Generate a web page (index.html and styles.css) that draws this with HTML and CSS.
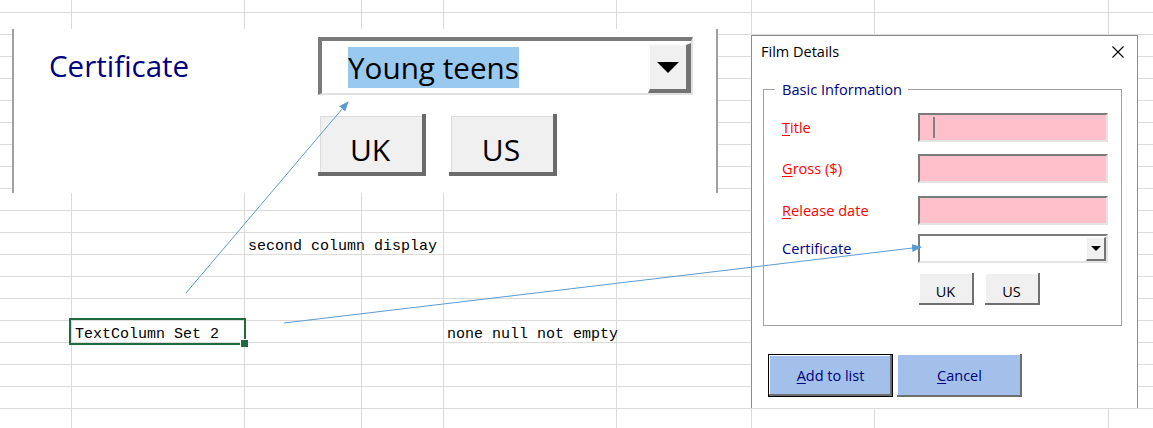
FILE: index.html
```html
<!DOCTYPE html>
<html lang="en">
<head>
<meta charset="utf-8">
<title>Film Details</title>
<link rel="stylesheet" href="styles.css">
</head>
<body>
<div class="sheet">
  <div class="cell c-second">second column display</div>
  <div class="cell c-textcol">TextColumn Set 2<span class="sel"><span class="handle"></span></span></div>
  <div class="cell c-none">none null not empty</div>

  <div class="panel">
    <div class="panel-label">Certificate</div>
    <div class="panel-controls">
      <div class="combo-big">
        <div class="combo-text"><span class="hl">Young teens</span></div>
        <div class="drop-big">
          <svg width="22" height="11" viewBox="0 0 22 11"><polygon points="0,0 22,0 11,11" fill="#000"/></svg>
        </div>
      </div>
      <div class="big-row">
        <button class="big-btn">UK</button>
        <button class="big-btn">US</button>
      </div>
    </div>
  </div>

  <div class="dialog">
    <div class="titlebar">
      <span class="title">Film Details</span>
      <svg class="close" width="12" height="12" viewBox="0 0 12 12"><path d="M0.5 0.5 L11.5 11.5 M11.5 0.5 L0.5 11.5" stroke="#000" stroke-width="1.1" fill="none"/></svg>
    </div>
    <fieldset class="frame">
      <legend>Basic Information</legend>
      <div class="frow">
        <span class="lbl req"><u>T</u>itle</span>
        <div class="tb"><span class="caret"></span></div>
      </div>
      <div class="frow r2">
        <span class="lbl req"><u>G</u>ross ($)</span>
        <div class="tb"></div>
      </div>
      <div class="frow r3">
        <span class="lbl req"><u>R</u>elease date</span>
        <div class="tb"></div>
      </div>
      <div class="frow r4">
        <span class="lbl">Certificate</span>
        <div class="combo-sm">
          <div class="drop-sm">
            <svg width="10" height="5" viewBox="0 0 10 5"><polygon points="0,0 10,0 5,5" fill="#000"/></svg>
          </div>
        </div>
      </div>
      <div class="sm-row">
        <button class="sm-btn">UK</button>
        <button class="sm-btn">US</button>
      </div>
    </fieldset>
    <div class="actions">
      <button class="act default"><u>A</u>dd to list</button>
      <button class="act"><u>C</u>ancel</button>
    </div>
  </div>

  <svg class="arrows" width="1153" height="428" viewBox="0 0 1153 428">
    <defs>
      <marker id="ah" markerWidth="10" markerHeight="8" refX="9" refY="4" orient="auto" markerUnits="userSpaceOnUse">
        <path d="M0,0 L10,4 L0,8 z" fill="#5b9bd5"/>
      </marker>
    </defs>
    <line x1="186" y1="293" x2="348" y2="102" stroke="#5b9bd5" stroke-width="1" marker-end="url(#ah)"/>
    <line x1="284" y1="323" x2="921" y2="247" stroke="#5b9bd5" stroke-width="1" marker-end="url(#ah)"/>
  </svg>
</div>
</body>
</html>
```

FILE: styles.css
```css
* { box-sizing: border-box; }

html, body {
  margin: 0;
  padding: 0;
  background: #fff;
}

body {
  width: 1153px;
  height: 428px;
  overflow: hidden;
}

/* spreadsheet */
.sheet {
  position: relative;
  width: 1153px;
  height: 428px;
  overflow: hidden;
  display: grid;
  grid-template-columns: 71px 173px 117px 82px 173px 135px 123px 234px 1fr;
  grid-template-rows: 12px repeat(19, 22px);
  background:
    linear-gradient(#dadada, #dadada) 71px 0 / 1px 100% no-repeat,
    linear-gradient(#dadada, #dadada) 244px 0 / 1px 100% no-repeat,
    linear-gradient(#dadada, #dadada) 361px 0 / 1px 100% no-repeat,
    linear-gradient(#dadada, #dadada) 443px 0 / 1px 100% no-repeat,
    linear-gradient(#dadada, #dadada) 616px 0 / 1px 100% no-repeat,
    linear-gradient(#dadada, #dadada) 751px 0 / 1px 100% no-repeat,
    linear-gradient(#dadada, #dadada) 874px 0 / 1px 100% no-repeat,
    linear-gradient(#dadada, #dadada) 1108px 0 / 1px 100% no-repeat,
    linear-gradient(to bottom, transparent 21px, #dadada 21px) 0 13px / 100% 22px repeat-y,
    #fff;
}

.cell {
  font-family: "Liberation Mono", "DejaVu Sans Mono", monospace;
  font-size: 15px;
  line-height: 17px;
  padding: 6px 0 0 4px;
  white-space: nowrap;
  color: #000;
}

.c-second { grid-column: 3; grid-row: 12; }
.c-textcol { grid-column: 2; grid-row: 16; position: relative; }
.c-none { grid-column: 5; grid-row: 16; }

.sel {
  position: absolute;
  left: -2px;
  top: -2px;
  right: -2px;
  bottom: -3px;
  border: 2px solid #1e6b40;
}

.handle {
  position: absolute;
  right: -4px;
  bottom: -4px;
  width: 8px;
  height: 8px;
  background: #1e6b40;
  border-left: 1px solid #fff;
  border-top: 1px solid #fff;
}

/* embedded form on the sheet */
.panel {
  position: absolute;
  left: 12px;
  top: 29px;
  width: 706px;
  height: 164px;
  background: #fff;
  border-left: 2px solid #a0a0a0;
  border-right: 2px solid #a0a0a0;
  display: flex;
  padding: 8px 0 0 35px;
  font-family: "Open Sans", "Noto Sans", sans-serif;
}

.panel-label {
  width: 269px;
  margin-top: 8px;
  font-size: 29.5px;
  line-height: 41px;
  color: #000080;
}

.combo-big {
  width: 375px;
  height: 58px;
  background: #fff;
  border-style: solid;
  border-width: 4px 2px 2px 4px;
  border-color: #7a7a7a #e1e1e1 #e1e1e1 #7a7a7a;
  display: flex;
  align-items: center;
}

.combo-text {
  flex: 1;
  padding: 2px 0 0 26px;
  font-size: 29.7px;
  line-height: 42px;
  color: #000;
}

.hl { background: #99c9ef; }

.drop-big {
  width: 43px;
  align-self: stretch;
  margin-top: 2px;
  background: #f0f0f0;
  border-style: solid;
  border-width: 2px 5px 4px 2px;
  border-color: #fcfcfc #737373 #737373 #fcfcfc;
  display: flex;
  align-items: center;
  justify-content: center;
}

.drop-big svg, .drop-sm svg { display: block; }

.big-row {
  display: flex;
  gap: 23px;
  margin-top: 19px;
}

.big-btn {
  width: 108px;
  height: 62px;
  border: 0;
  background: #f0f0f0;
  box-shadow: inset -4px -4px 0 #6b6b6b, inset 2px 2px 0 #fff, inset 3px 3px 0 #dcdcdc;
  font-family: "Open Sans", "Noto Sans", sans-serif;
  font-size: 30px;
  line-height: 41px;
  padding: 8px 4px 0 0;
  color: #000;
}

/* dialog */
.dialog {
  position: absolute;
  left: 751px;
  top: 35px;
  width: 387px;
  height: 373px;
  background: #fff;
  border: 1px solid #8c8c8c;
  border-bottom: 0;
  font-family: "Open Sans", "Noto Sans", sans-serif;
  z-index: 2;
}

.titlebar {
  height: 44px;
  display: flex;
  justify-content: space-between;
  align-items: flex-start;
  padding: 6px 13px 0 9px;
}

.title {
  font-size: 14.5px;
  line-height: 19px;
  color: #000;
}

.close {
  display: block;
  margin-top: 4px;
}

.frame {
  margin: 0 0 0 11px;
  width: 359px;
  min-inline-size: 0;
  padding: 15px 13px 20px 11px;
  border: 1px solid #a0a0a0;
}

.frame legend {
  padding: 0 6px 0 7px;
  margin: 0;
  font-size: 14.6px;
  line-height: 18px;
  color: #000080;
}

.frow {
  display: flex;
  height: 29px;
}

.r2 { margin-top: 12px; }
.r3 { margin-top: 13px; }
.r4 { margin-top: 9px; }

.lbl {
  width: 143px;
  padding-left: 7px;
  font-size: 14.6px;
  line-height: 29px;
  color: #000080;
  white-space: nowrap;
}

.lbl.req { color: #ff0000; }

.lbl u {
  text-decoration-thickness: 1px;
  text-underline-offset: 2px;
}

.tb {
  width: 190px;
  height: 29px;
  background: #ffc0cb;
  border-style: solid;
  border-width: 2px;
  border-color: #7b7b7b #e3e3e3 #e3e3e3 #7b7b7b;
}

.caret {
  display: block;
  width: 2px;
  height: 21px;
  margin: 2px 0 0 13px;
  background: #808080;
}

.combo-sm {
  width: 190px;
  height: 29px;
  background: #fff;
  border-style: solid;
  border-width: 2px;
  border-color: #7b7b7b #e3e3e3 #e3e3e3 #7b7b7b;
  display: flex;
  justify-content: flex-end;
  align-items: flex-start;
}

.drop-sm {
  width: 20px;
  height: 24px;
  margin-top: 1px;
  background: #f0f0f0;
  border-style: solid;
  border-width: 1px 2px 2px 1px;
  border-color: #fff #737373 #737373 #fff;
  display: flex;
  align-items: center;
  justify-content: center;
}

.sm-row {
  display: flex;
  gap: 11px;
  margin-top: 10px;
  padding-left: 144px;
}

.sm-btn {
  width: 55px;
  height: 32px;
  border: 0;
  background: #f0f0f0;
  box-shadow: inset -2px -2px 0 #707070, inset 1px 1px 0 #fff;
  font-family: "Open Sans", "Noto Sans", sans-serif;
  font-size: 14.5px;
  line-height: 19px;
  padding: 4px 2px 0 0;
  color: #000;
}

.actions {
  display: flex;
  gap: 4px;
  margin-top: 28px;
  padding-left: 16px;
}

.act {
  width: 125px;
  height: 43px;
  border: 0;
  background: #a3c0eb;
  box-shadow: inset -2px -2px 0 #6e6e6e, inset 1px 1px 0 #fff;
  font-family: "Open Sans", "Noto Sans", sans-serif;
  font-size: 14.5px;
  line-height: 19px;
  color: #00007a;
  padding: 0;
}

.act.default { border: 1px solid #000; }

.act u {
  text-decoration-thickness: 1px;
  text-underline-offset: 2px;
}

/* connector arrows */
.arrows {
  position: absolute;
  left: 0;
  top: 0;
  z-index: 3;
  pointer-events: none;
}
```
